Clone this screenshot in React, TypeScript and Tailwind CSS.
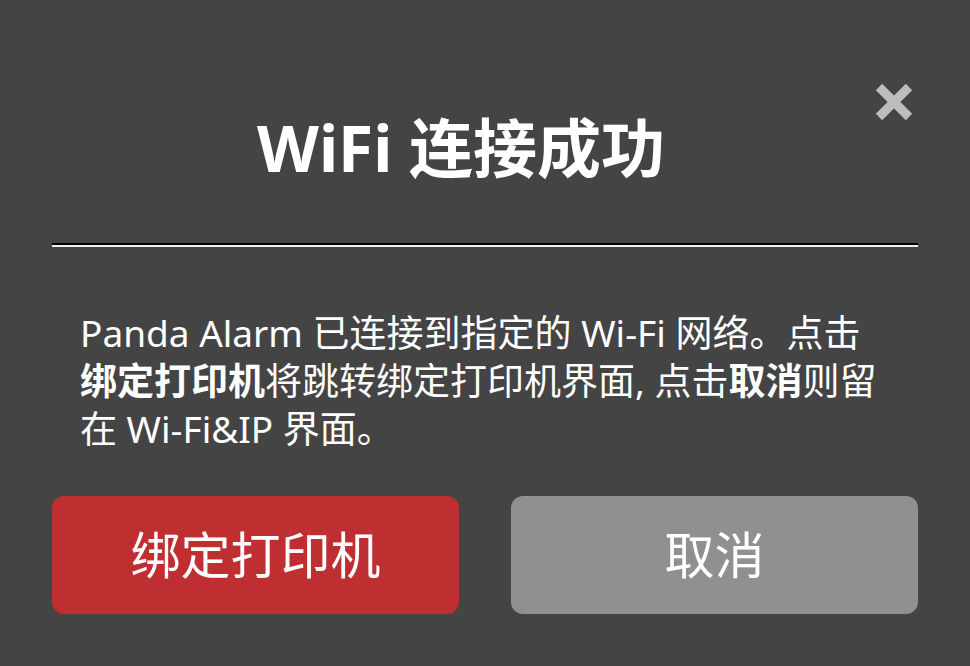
import React from 'react';

const cjk = { fontFamily: '"Noto Sans", "Noto Sans CJK SC", sans-serif' };

function CloseIcon() {
  return (
    <svg width="38" height="38" viewBox="0 0 38 38" aria-hidden="true">
      <path d="M4 4 L34 34 M34 4 L4 34" stroke="#bdbdbd" strokeWidth="9" strokeLinecap="butt" />
    </svg>
  );
}

export default function App() {
  return (
    <div className="w-[970px] h-[666px] bg-[#444444] text-white px-[52px] pt-[83px]" style={cjk}>
      <div className="flex items-start">
        <h1 className="flex-1 text-center text-[64px] leading-[74px] font-bold mt-[28px]">WiFi 连接成功</h1>
        <button className="w-[48px] flex justify-center">
          <CloseIcon />
        </button>
      </div>

      <div className="mt-[58px]">
        <div className="h-[2px] bg-black" />
        <div className="h-[2px] bg-[#eeeeee]" />
      </div>

      <p className="mt-[62px] pl-[28px] text-[37px] leading-[48px] whitespace-nowrap">
        Panda Alarm 已连接到指定的 Wi-Fi 网络。点击
        <br />
        <b className="font-bold">绑定打印机</b>将跳转绑定打印机界面, 点击<b className="font-bold">取消</b>则留
        <br />
        在 Wi-Fi&amp;IP 界面。
      </p>

      <div className="mt-[43px] grid grid-cols-2 gap-[52px]">
        <button className="h-[118px] rounded-[12px] bg-[#bf2e30] text-[50px]">绑定打印机</button>
        <button className="h-[118px] rounded-[12px] bg-[#909090] text-[50px]">取消</button>
      </div>
    </div>
  );
}
